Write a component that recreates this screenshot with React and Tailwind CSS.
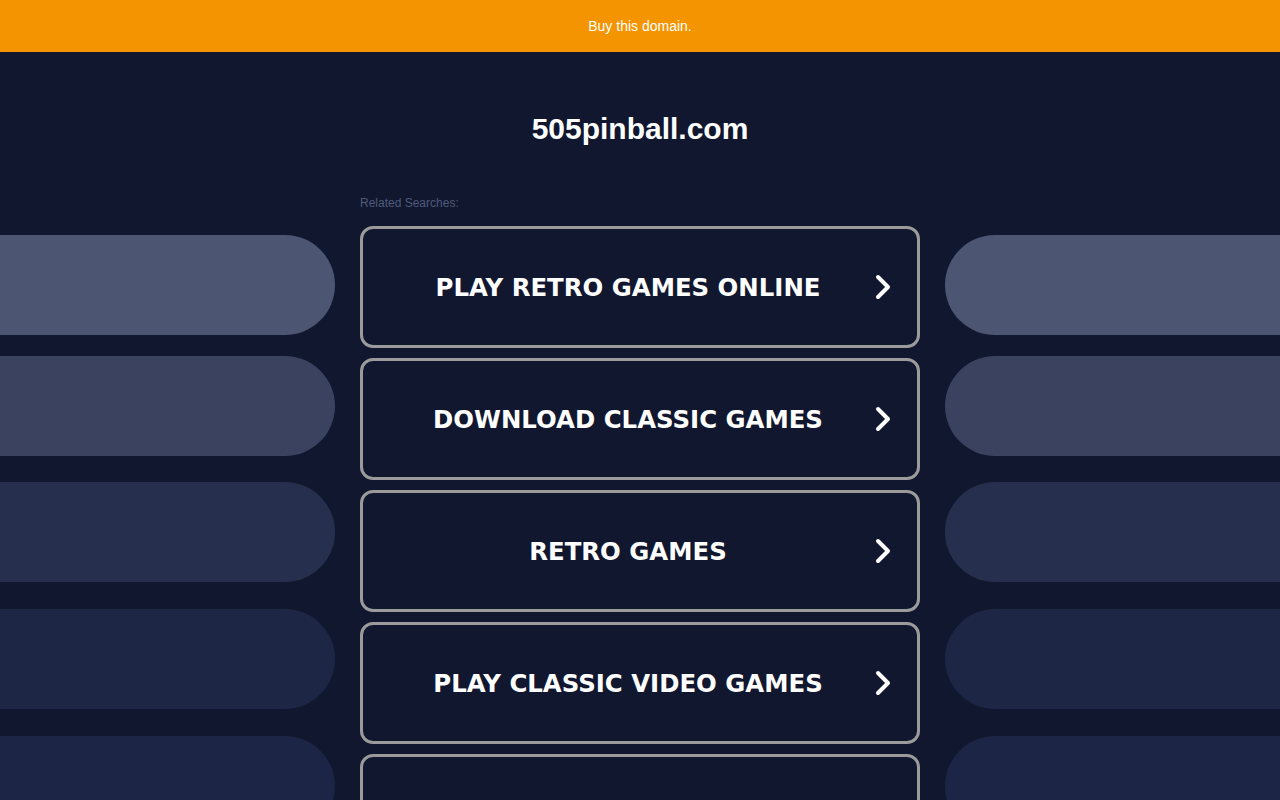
import React from 'react';

const searches = [
  'PLAY RETRO GAMES ONLINE',
  'DOWNLOAD CLASSIC GAMES',
  'RETRO GAMES',
  'PLAY CLASSIC VIDEO GAMES',
  'ARCADE GAMES',
];

const pills = [
  { bg: 'bg-[#4c5673]', mt: 'mt-0' },
  { bg: 'bg-[#3a4260]', mt: 'mt-[21px]' },
  { bg: 'bg-[#262f4d]', mt: 'mt-[26px]' },
  { bg: 'bg-[#1e2646]', mt: 'mt-[27px]' },
  { bg: 'bg-[#1c2545]', mt: 'mt-[27px]' },
];

const Chevron = () => (
  <svg width="18" height="28" viewBox="0 0 18 28" className="ml-[1px]">
    <path d="M4 4 L14 14 L4 24" fill="none" stroke="#ffffff" strokeWidth="4" strokeLinecap="round" strokeLinejoin="round" />
  </svg>
);

const SidePills = ({ side }) => (
  <div className="flex flex-col pt-[183px]">
    {pills.map((p, i) => (
      <div
        key={i}
        className={`${p.bg} ${p.mt} h-[100px] shrink-0 ${side === 'left' ? 'rounded-r-[50px]' : 'rounded-l-[50px]'}`}
      />
    ))}
  </div>
);

export default function App() {
  return (
    <div className="h-[800px] overflow-hidden bg-[#11172f] font-['Liberation_Sans',Arial,sans-serif]">
      <div className="h-[52px] bg-[#f39400] flex items-center justify-center">
        <span className="text-white text-[14px]">Buy this domain.</span>
      </div>

      <div className="grid grid-cols-[335px_560px_335px] gap-x-[25px]">
        <SidePills side="left" />

        <div className="flex flex-col">
          <h1 className="pt-[60px] text-center text-white text-[30px] leading-[34px] font-bold">505pinball.com</h1>
          <p className="mt-[49px] text-[12px] leading-[16px] text-[#4f5a79]">Related Searches:</p>
          <div className="mt-[15px] flex flex-col gap-[10px]">
            {searches.map((s) => (
              <div
                key={s}
                className="h-[122px] shrink-0 flex items-center border-[3px] border-[#9b9b9b] rounded-[13px]"
              >
                <span className="flex-1 pl-[20px] pt-[3px] text-center text-white text-[24.4px] font-bold font-['DejaVu_Sans',Verdana,sans-serif]">
                  {s}
                </span>
                <span className="w-[44px] flex items-center">
                  <Chevron />
                </span>
              </div>
            ))}
          </div>
        </div>

        <SidePills side="right" />
      </div>
    </div>
  );
}
